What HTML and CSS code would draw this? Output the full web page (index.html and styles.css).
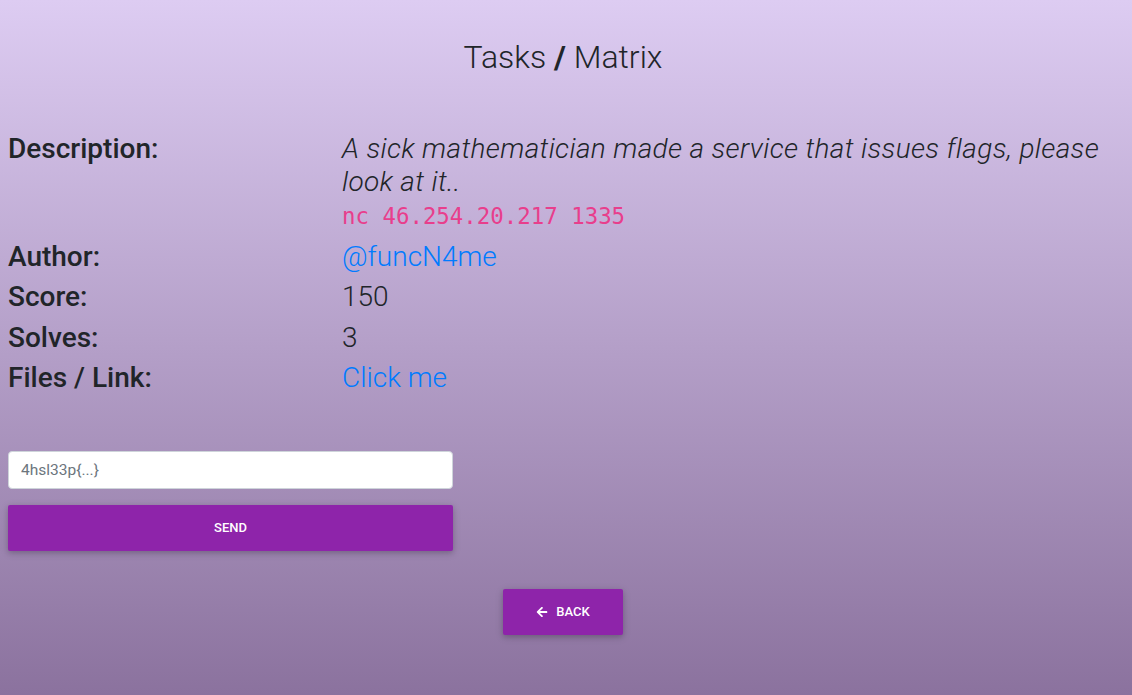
FILE: index.html
```html
<!DOCTYPE html>
<html lang="en">
<head>
<meta charset="utf-8">
<title>Tasks / Matrix</title>
<link rel="stylesheet" href="styles.css">
</head>
<body>
<main class="page">
  <h1 class="title">Tasks <b>/</b> Matrix</h1>
  <dl class="info">
    <dt>Description:</dt>
    <dd>
      <em class="desc">A sick mathematician made a service that issues flags, please look at it..</em>
      <code class="cmd">nc 46.254.20.217 1335</code>
    </dd>
    <dt>Author:</dt>
    <dd><a class="link" href="#">@funcN4me</a></dd>
    <dt>Score:</dt>
    <dd>150</dd>
    <dt>Solves:</dt>
    <dd>3</dd>
    <dt>Files / Link:</dt>
    <dd><a class="link" href="#">Click me</a></dd>
  </dl>
  <form class="flag-form">
    <input class="flag-input" type="text" placeholder="4hsl33p{...}">
    <button class="btn btn-send" type="button">SEND</button>
  </form>
  <div class="back-wrap">
    <a class="btn btn-back" href="#">
      <svg class="arrow" viewBox="0 0 448 512" width="12" height="12"><path fill="currentColor" d="M257.5 445.1l-22.2 22.2c-9.4 9.4-24.6 9.4-33.9 0L7 273c-9.4-9.4-9.4-24.6 0-33.9L201.4 44.7c9.4-9.4 24.6-9.4 33.9 0l22.2 22.2c9.5 9.5 9.3 25-.4 34.3L136.6 216H424c13.3 0 24 10.7 24 24v32c0 13.3-10.7 24-24 24H136.6l120.5 114.8c9.8 9.3 10 24.8.4 34.3z"/></svg>
      BACK
    </a>
  </div>
</main>
</body>
</html>
```

FILE: styles.css
```css
html, body {
  margin: 0;
  padding: 0;
  height: 100%;
}
body {
  background: linear-gradient(to bottom, #ddccf2 0%, #8b729e 100%);
  font-family: Roboto, "Noto Sans", sans-serif;
  color: #212529;
}
.page {
  width: 1110px;
  margin-left: 8px;
  padding-top: 37px;
}
.title {
  margin: 0;
  text-align: center;
  font-size: 32px;
  font-weight: 300;
  line-height: 40px;
  color: #212529;
}
.title b {
  font-weight: 700;
}
.info {
  display: grid;
  grid-template-columns: 334px 1fr;
  margin: 55px 0 0;
  font-size: 28px;
  line-height: 33px;
  row-gap: 7.5px;
}
.info dt {
  font-weight: 500;
  margin: 0;
}
.info dd {
  margin: 0;
  font-weight: 300;
}
.desc {
  display: block;
  font-style: italic;
  letter-spacing: 0.35px;
}
.cmd {
  display: block;
  padding-top: 2px;
  font-family: "DejaVu Sans Mono", monospace;
  font-size: 22.4px;
  line-height: 32px;
  color: #e83e8c;
}
.link {
  color: #007bff;
  text-decoration: none;
}
.flag-form {
  width: 445px;
  margin-top: 56.5px;
  display: flex;
  flex-direction: column;
  gap: 16px;
}
.flag-input {
  box-sizing: border-box;
  height: 38px;
  padding: 0 12px;
  border: 1px solid #ced4da;
  border-radius: 4px;
  background: #fff;
  font-family: Roboto, sans-serif;
  font-size: 15.5px;
  color: #495057;
}
.flag-input::placeholder {
  color: #6c757d;
}
.btn {
  box-sizing: border-box;
  display: flex;
  align-items: center;
  justify-content: center;
  height: 46px;
  border: 0;
  border-radius: 2px;
  background: #8e24aa;
  color: #fff;
  font-family: Roboto, sans-serif;
  font-size: 13px;
  font-weight: 500;
  text-decoration: none;
  box-shadow: 0 2px 5px 0 rgba(0,0,0,.16), 0 2px 10px 0 rgba(0,0,0,.12);
}
.btn-send {
  width: 100%;
}
.back-wrap {
  display: flex;
  justify-content: center;
  margin-top: 38px;
}
.btn-back {
  width: 120px;
  gap: 8px;
}
.arrow {
  display: block;
}
```
